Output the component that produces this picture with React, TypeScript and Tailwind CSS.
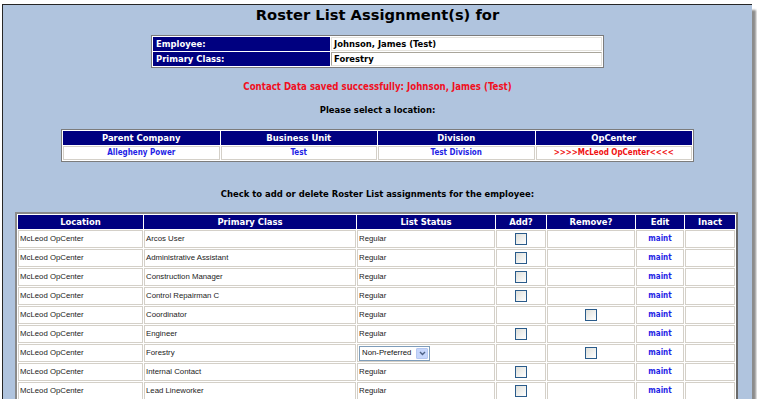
import React from "react";

const tahoma = "font-['DejaVu_Sans_Condensed','Liberation_Sans',sans-serif]";
const arial = "font-['Liberation_Sans',Arial,sans-serif]";

const rows = [
  { cls: "Arcos User", select: false, add: true },
  { cls: "Administrative Assistant", select: false, add: true },
  { cls: "Construction Manager", select: false, add: true },
  { cls: "Control Repairman C", select: false, add: true },
  { cls: "Coordinator", select: false, add: false },
  { cls: "Engineer", select: false, add: true },
  { cls: "Forestry", select: true, add: false },
  { cls: "Internal Contact", select: false, add: true },
  { cls: "Lead Lineworker", select: false, add: true },
];

function CheckBox() {
  return (
    <span className="inline-block align-middle w-[12px] h-[12px] border border-[#2a5b8a] bg-gradient-to-br from-[#dedfda] to-white" />
  );
}

function StatusSelect() {
  return (
    <span className="inline-flex items-center align-middle h-[15px] w-[71px] border border-[#7f9db9] bg-white">
      <span className={`flex-1 pl-[2px] text-[7.8px] text-[#111] ${arial}`}>Non-Preferred</span>
      <span className="mr-[1px] flex h-[11px] w-[12px] items-center justify-center rounded-[1px] border border-[#b5c8f2] bg-[#c6d6fb]">
        <svg width="7" height="5" viewBox="0 0 7 5">
          <path d="M1 1 L3.5 3.5 L6 1" fill="none" stroke="#4d6185" strokeWidth="1.4" />
        </svg>
      </span>
    </span>
  );
}

export default function App() {
  return (
    <div className="h-[399px] overflow-hidden bg-white">
      {/* Page frame */}
      <div className="ml-[2px] mt-[4px] h-[440px] w-[750px] border-t border-l border-[#262626] bg-[#b0c4de] shadow-[4px_6px_2px_rgba(0,0,0,0.45)]">
        <div className="flex flex-col items-center">
          <h1 className="font-['DejaVu_Sans',Verdana,sans-serif] text-[14.7px] font-bold leading-[20px] text-black">
            Roster List Assignment(s) for
          </h1>

          {/* Employee */}
          <table className={`mt-[10px] w-[453px] table-fixed border-separate border-spacing-[1px] border border-[#7c7c7c] bg-white ${tahoma} text-[9.4px] font-bold`}>
            <colgroup>
              <col className="w-[177px]" />
              <col />
            </colgroup>
            <tbody>
              <tr>
                <td className="h-[14px] border border-[#000080] bg-[#000080] p-0 pl-[2px] leading-[12px] text-white">Employee:</td>
                <td className="h-[14px] border border-[#e4e2dc] p-0 pl-[2px] leading-[12px] text-black">Johnson, James (Test)</td>
              </tr>
              <tr>
                <td className="h-[14px] border border-[#000080] bg-[#000080] p-0 pl-[2px] leading-[12px] text-white">Primary Class:</td>
                <td className="h-[14px] border border-[#a9a59a] border-b-[#e4e2dc] border-r-[#e4e2dc] p-0 pl-[2px] leading-[12px] text-black">Forestry</td>
              </tr>
            </tbody>
          </table>

          <p className={`mt-[12px] ${tahoma} text-[9.6px] font-bold leading-[13px] text-[#f0101e]`}>
            Contact Data saved successfully: Johnson, James (Test)
          </p>
          <p className={`mt-[10px] ${tahoma} text-[9.4px] font-bold leading-[13px] text-black`}>
            Please select a location:
          </p>

          {/* Location */}
          <table className={`mt-[13px] w-[633px] table-fixed border-separate border-spacing-[1px] border border-[#7c7c7c] bg-white ${tahoma} text-center font-bold`}>
            <thead>
              <tr className="text-[9.4px] text-white">
                <th className="h-[14px] border border-[#000080] bg-[#000080] p-0 leading-[12px]">Parent Company</th>
                <th className="h-[14px] border border-[#000080] bg-[#000080] p-0 leading-[12px]">Business Unit</th>
                <th className="h-[14px] border border-[#000080] bg-[#000080] p-0 leading-[12px]">Division</th>
                <th className="h-[14px] border border-[#000080] bg-[#000080] p-0 leading-[12px]">OpCenter</th>
              </tr>
            </thead>
            <tbody>
              <tr className="text-[8px]">
                <td className="h-[14px] border border-[#d4d0c8] p-0 leading-[12px] text-[#1f1fe6]">Allegheny Power</td>
                <td className="h-[14px] border border-[#d4d0c8] p-0 leading-[12px] text-[#1f1fe6]">Test</td>
                <td className="h-[14px] border border-[#d4d0c8] p-0 leading-[12px] text-[#1f1fe6]">Test Division</td>
                <td className="h-[14px] border border-[#d4d0c8] p-0 leading-[12px] text-[#f01010]">&gt;&gt;&gt;&gt;McLeod OpCenter&lt;&lt;&lt;&lt;</td>
              </tr>
            </tbody>
          </table>

          <p className={`mt-[25px] ${tahoma} text-[9.4px] font-bold leading-[13px] text-black`}>
            Check to add or delete Roster List assignments for the employee:
          </p>

          {/* Roster list */}
          <table className="mt-[12px] -translate-x-[1px] w-[723px] table-fixed border-separate border-spacing-[1px] border-2 border-[#8a8a8a] border-b-[#6a6a6a] border-r-[#6a6a6a] bg-white">
            <colgroup>
              <col className="w-[125px]" />
              <col className="w-[212px]" />
              <col className="w-[138px]" />
              <col className="w-[50px]" />
              <col className="w-[88px]" />
              <col className="w-[48px]" />
              <col />
            </colgroup>
            <thead>
              <tr className={`${tahoma} text-[9.4px] font-bold text-white`}>
                {["Location", "Primary Class", "List Status", "Add?", "Remove?", "Edit", "Inact"].map((h) => (
                  <th key={h} className="h-[14px] border border-[#000080] bg-[#000080] p-0 text-center leading-[12px]">
                    {h}
                  </th>
                ))}
              </tr>
            </thead>
            <tbody className={`${arial} text-[7.8px] text-[#222]`}>
              {rows.map((r) => (
                <tr key={r.cls}>
                  <td className="h-[18px] border border-[#d4d0c8] p-0 pl-[1px] align-middle">McLeod OpCenter</td>
                  <td className="h-[18px] border border-[#d4d0c8] p-0 pl-[1px] align-middle">{r.cls}</td>
                  <td className="h-[18px] border border-[#d4d0c8] p-0 pl-[1px] align-middle">
                    {r.select ? <StatusSelect /> : "Regular"}
                  </td>
                  <td className="h-[18px] border border-[#d4d0c8] p-0 text-center align-middle leading-none">
                    {r.add && <CheckBox />}
                  </td>
                  <td className="h-[18px] border border-[#d4d0c8] p-0 text-center align-middle leading-none">
                    {!r.add && <CheckBox />}
                  </td>
                  <td className={`h-[18px] border border-[#d4d0c8] p-0 text-center align-middle ${tahoma} text-[8px] font-bold text-[#1f1fe6]`}>
                    maint
                  </td>
                  <td className="h-[18px] border border-[#d4d0c8] p-0" />
                </tr>
              ))}
            </tbody>
          </table>
        </div>
      </div>
    </div>
  );
}
